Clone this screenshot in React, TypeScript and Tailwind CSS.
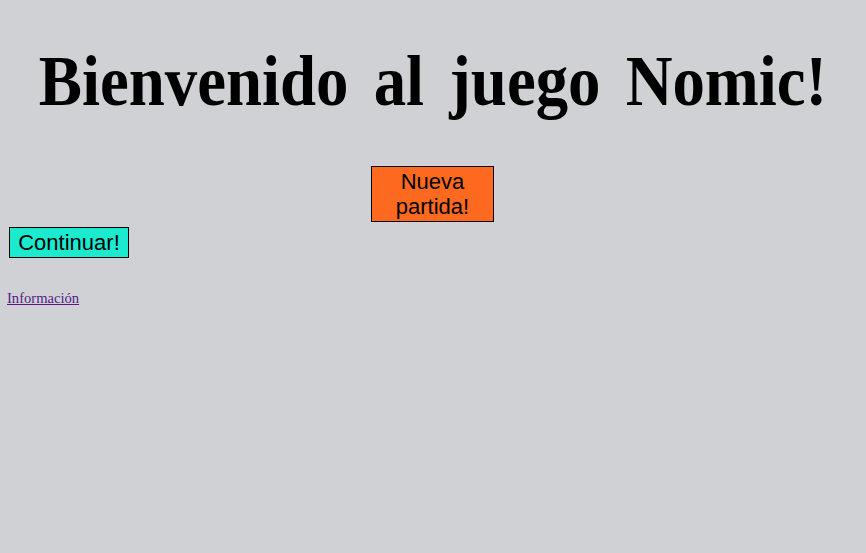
export default function App() {
  return (
    <div className="min-h-[553px] w-full overflow-hidden bg-[#d0d1d5] pt-[1px]" style={{ fontFamily: '"Liberation Serif", serif' }}>
      <h1 className="mt-[40px] flex justify-center text-[72px] font-bold leading-[80px] text-black">
        <span className="shrink-0 whitespace-nowrap origin-center scale-x-[0.9] [word-spacing:10px]">Bienvenido al juego Nomic!</span>
      </h1>
      <div className="mt-[45px] flex justify-center">
        <button className="mr-[1px] w-[123px] h-[56px] border border-black bg-[#fd6a1f] px-[6px] text-[22px] leading-[25px] text-black" style={{ fontFamily: '"Liberation Sans", Arial, sans-serif' }}>
          Nueva partida!
        </button>
      </div>
      <div className="mt-[5px] pl-[9px]">
        <button className="h-[31px] w-[120px] border border-black bg-[#1ceacf] px-[6px] text-[22px] leading-[25px] text-black" style={{ fontFamily: '"Liberation Sans", Arial, sans-serif' }}>
          Continuar!
        </button>
      </div>
      <div className="mt-[31px] pl-[7px] leading-[18px]">
        <a href="#" className="text-[14.6px] text-[#551a8b] underline">Información</a>
      </div>
    </div>
  );
}
